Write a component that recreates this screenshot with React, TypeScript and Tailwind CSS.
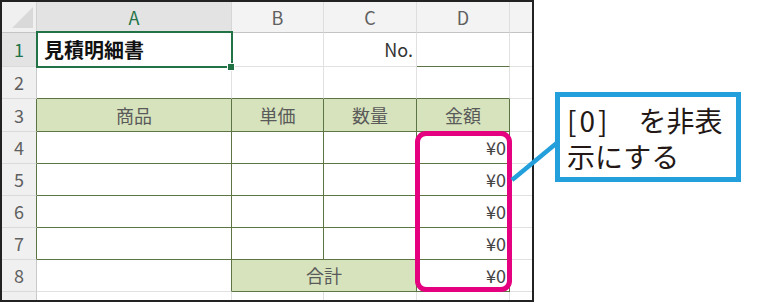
import React from "react";

const font = { fontFamily: '"Noto Sans CJK JP", "Noto Sans", sans-serif' };

function RH({ n, cls = "", active = false }: { n: string; cls?: string; active?: boolean }) {
  return (
    <div
      className={
        "flex items-center justify-center border-r border-b border-b-[#dadada] text-[18px] " +
        (active ? "bg-[#e3e3e3] text-[#217346] " : "bg-[#f0f0f0] text-[#606060] ") +
        cls
      }
    >
      {n}
    </div>
  );
}

export default function App() {
  return (
    <div className="relative w-[783px] h-[303px] bg-white overflow-hidden" style={font}>
      <div className="relative w-[534px] h-[302px] border-2 border-[#222] overflow-hidden">
        <div className="grid grid-cols-[35px_195px_92px_93px_93px_1fr] grid-rows-[31px_34px_32px_33px_32px_32px_32px_32px_32px_1fr] h-full">
          {/* header row */}
          <div className="relative bg-[#f0f0f0] border-r border-b border-r-[#d0d0d0] border-b-[#c4c4c4]">
            <svg className="absolute right-[3px] bottom-[4px]" width="21" height="21" viewBox="0 0 21 21">
              <polygon points="21,0 21,21 0,21" fill="#d9d9d9" />
            </svg>
          </div>
          <div className="flex items-center justify-center bg-[#e3e3e3] text-[#217346] text-[18px] border-r border-b border-r-[#d6d6d6] border-b-[#c4c4c4]">A</div>
          <div className="flex items-center justify-center bg-[#f3f3f3] text-[#606060] text-[18px] border-r border-b border-r-[#dedede] border-b-[#c4c4c4]">B</div>
          <div className="flex items-center justify-center bg-[#f3f3f3] text-[#606060] text-[18px] border-r border-b border-r-[#dedede] border-b-[#c4c4c4]">C</div>
          <div className="flex items-center justify-center bg-[#f3f3f3] text-[#606060] text-[18px] border-r border-b border-r-[#dedede] border-b-[#c4c4c4]">D</div>
          <div className="bg-[#f3f3f3] border-b border-b-[#c4c4c4]"></div>

          {/* row 1 */}
          <RH n="1" active cls="border-r-[#c9c9c9]" />
          <div className="flex items-center pl-[7px] text-[20px] font-bold text-[#111] border-r border-b border-r-[#e1e1e1] border-b-[#e1e1e1]">見積明細書</div>
          <div className="border-r border-b border-r-[#e1e1e1] border-b-[#e1e1e1]"></div>
          <div className="flex items-center justify-end pr-[3px] text-[18px] text-[#333] border-r border-b border-r-[#e1e1e1] border-b-[#e1e1e1]">No.</div>
          <div className="border-r border-b border-r-[#e1e1e1] border-b-[#5d7445]"></div>
          <div className="border-b border-b-[#e1e1e1]"></div>

          {/* row 2 */}
          <RH n="2" cls="border-r-[#c9c9c9]" />
          <div className="border-r border-b border-r-[#e1e1e1] border-b-[#5d7445]"></div>
          <div className="border-r border-b border-r-[#e1e1e1] border-b-[#5d7445]"></div>
          <div className="border-r border-b border-r-[#e1e1e1] border-b-[#5d7445]"></div>
          <div className="border-r border-b border-r-[#e1e1e1] border-b-[#5d7445]"></div>
          <div className="border-b border-b-[#e1e1e1]"></div>

          {/* row 3 */}
          <RH n="3" cls="border-r-[#5d7445]" />
          <div className="flex items-center justify-center bg-[#d6e3bc] text-[18px] text-[#5a5a5a] border-r border-b border-r-[#5d7445] border-b-[#5d7445]">商品</div>
          <div className="flex items-center justify-center bg-[#d6e3bc] text-[18px] text-[#5a5a5a] border-r border-b border-r-[#5d7445] border-b-[#5d7445]">単価</div>
          <div className="flex items-center justify-center bg-[#d6e3bc] text-[18px] text-[#5a5a5a] border-r border-b border-r-[#5d7445] border-b-[#5d7445]">数量</div>
          <div className="flex items-center justify-center bg-[#d6e3bc] text-[18px] text-[#5a5a5a] border-r border-b border-r-[#5d7445] border-b-[#5d7445]">金額</div>
          <div className="border-b border-b-[#e1e1e1]"></div>

          {/* rows 4-7 */}
          {["4", "5", "6", "7"].map((n) => (
            <React.Fragment key={n}>
              <RH n={n} cls="border-r-[#5d7445]" />
              <div className="border-r border-b border-r-[#5d7445] border-b-[#5d7445]"></div>
              <div className="border-r border-b border-r-[#5d7445] border-b-[#5d7445]"></div>
              <div className="border-r border-b border-r-[#5d7445] border-b-[#5d7445]"></div>
              <div className="flex items-center justify-end pr-[3px] text-[18px] text-[#444] border-r border-b border-r-[#5d7445] border-b-[#5d7445]">¥0</div>
              <div className="border-b border-b-[#e1e1e1]"></div>
            </React.Fragment>
          ))}

          {/* row 8 */}
          <RH n="8" cls="border-r-[#c9c9c9]" />
          <div className="border-r border-b border-r-[#5d7445] border-b-[#e1e1e1]"></div>
          <div className="col-span-2 flex items-center justify-center bg-[#d6e3bc] text-[18px] text-[#5a5a5a] border-r border-b border-r-[#5d7445] border-b-[#5d7445]">合計</div>
          <div className="flex items-center justify-end pr-[3px] text-[18px] text-[#444] border-r border-b border-r-[#5d7445] border-b-[#5d7445]">¥0</div>
          <div className="border-b border-b-[#e1e1e1]"></div>

          {/* row 9 */}
          <div className="flex justify-center bg-[#f0f0f0] border-r border-r-[#c9c9c9] text-[18px] text-[#606060] leading-[30px] overflow-hidden">
            <span className="block">9</span>
          </div>
          <div className="border-r border-r-[#e1e1e1]"></div>
          <div className="border-r border-r-[#e1e1e1]"></div>
          <div className="border-r border-r-[#e1e1e1]"></div>
          <div className="border-r border-r-[#e1e1e1]"></div>
          <div></div>
        </div>

        {/* selection box on A1 */}
        <div className="absolute left-[34px] top-[29px] w-[197px] h-[37px] border-[2.5px] border-[#217346] pointer-events-none"></div>
        <div className="absolute left-[225px] top-[61px] w-[8px] h-[8px] bg-[#217346] border border-white"></div>
      </div>

      {/* pink highlight */}
      <div className="absolute left-[415px] top-[131px] w-[97px] h-[161px] border-[5px] border-[#e4007f] rounded-[11px]"></div>

      {/* pointer line */}
      <svg className="absolute left-[500px] top-[130px]" width="70" height="60" viewBox="0 0 70 60">
        <line x1="12" y1="50" x2="58" y2="12" stroke="#239fdc" strokeWidth="4.5" />
      </svg>

      {/* callout */}
      <div className="absolute left-[555px] top-[92px] w-[186px] h-[90px] border-[5px] border-[#239fdc] bg-white pl-[7px] pt-[5px] text-[28px] leading-[36px] text-[#231815]">
        <span className="tracking-[3px]">[0]</span>　を非表<br />示にする
      </div>
    </div>
  );
}
